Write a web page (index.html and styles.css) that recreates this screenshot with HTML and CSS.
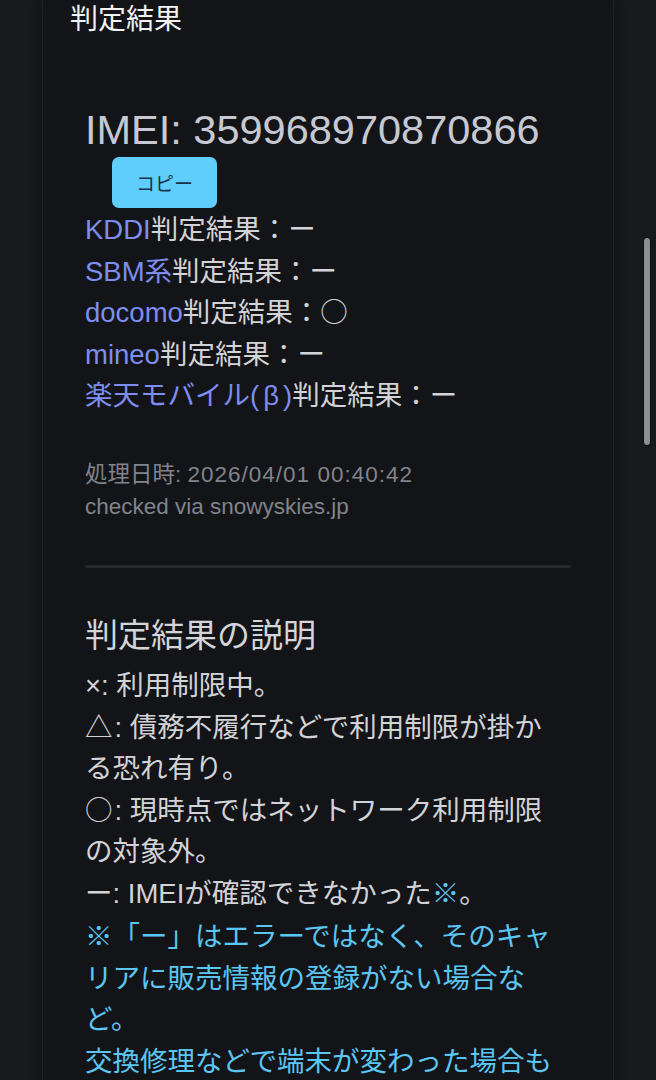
FILE: index.html
```html
<!DOCTYPE html>
<html lang="ja">
<head>
  <meta charset="UTF-8" />
  <meta name="viewport" content="width=device-width, initial-scale=1.0"/>
  <title>判定結果</title>
  <link rel="stylesheet" href="styles.css">
</head>
<body>

  <div class="card">
    <h2 class="card-title">判定結果</h2>

    <!-- Result -->
    <div class="result">
      <div class="imei">IMEI: 359968970870866</div>
      <button class="copy-btn">コピー</button>

      <ul class="carriers">
        <li><span class="carrier">KDDI</span>判定結果：ー</li>
        <li><span class="carrier">SBM系</span>判定結果：ー</li>
        <li><span class="carrier">docomo</span>判定結果：<span class="sym">○</span></li>
        <li><span class="carrier">mineo</span>判定結果：ー</li>
        <li><span class="carrier">楽天モバイル(<span class="beta">β</span>)</span>判定結果：ー</li>
      </ul>

      <p class="meta">処理日時: <span class="date">2026/04/01 00:40:42</span><br>checked via snowyskies.jp</p>

      <hr class="divider">

      <!-- Legend -->
      <h3 class="legend-title">判定結果の説明</h3>
      <p class="legend">
        ×: 利用制限中。<br>
        <span class="sym">△</span>: 債務不履行などで利用制限が掛かる恐れ有り。<br>
        <span class="sym">○</span>: 現時点ではネットワーク利用制限の対象外。<br>
        ー: IMEIが確認できなかった<span class="mark">※</span>。
      </p>
      <p class="note">
        ※「ー」はエラーではなく、そのキャリアに販売情報の登録がない場合など。<br>
        交換修理などで端末が変わった場合も「ー」になります。
      </p>
    </div>
  </div>

  <div class="scroll-thumb"></div>

</body>
</html>
```

FILE: styles.css
```css
html, body {
  height: 100%;
  overflow: hidden;
}

body {
  margin: 0;
  padding: 0;
  background: #18191d;
  font-family: 'Liberation Sans', 'Noto Sans CJK JP', sans-serif;
  color: #d2d3d7;
}

.card {
  margin: 0 42px;
  min-height: 100%;
  padding: 0 27px;
  background-color: #131418;
  border-left: 1px solid #1f2025;
  border-right: 1px solid #1f2025;
  box-shadow: 0 0 10px rgba(0, 0, 0, 0.35);
}

.card-title {
  margin: 0;
  font-size: 28px;
  font-weight: normal;
  line-height: 40px;
  color: #f2f2f4;
}

.result {
  margin-top: 66px;
  padding: 0 15px;
}

.imei {
  font-size: 41.5px;
  line-height: 48px;
  color: #c6c9d1;
}

.copy-btn {
  display: block;
  margin: 3px 0 0 27px;
  height: 51px;
  padding: 0 24px;
  background-color: #5fcefd;
  color: #1b3246;
  border: none;
  border-radius: 7px;
  font-family: 'Noto Sans CJK JP', sans-serif;
  font-size: 19px;
  cursor: pointer;
}

.carriers {
  list-style: none;
  margin: 1px 0 0;
  padding: 0;
  font-size: 27.5px;
  line-height: 41.5px;
}

.carrier {
  color: #7d8df0;
}

.beta {
  margin: 0 4px;
}

.sym {
  font-family: 'Noto Sans CJK JP', sans-serif;
  line-height: 1;
  margin-right: 2px;
}

.meta {
  margin: 42.5px 0 0;
  font-size: 22.5px;
  line-height: 32px;
  color: #80848b;
}

.date {
  letter-spacing: 1px;
}

.divider {
  margin: 42px 0 0;
  height: 3px;
  border: none;
  border-radius: 2px;
  background-color: #26282d;
}

.legend-title {
  margin: 43px 0 0;
  font-size: 33px;
  font-weight: normal;
  line-height: 50px;
  color: #d4d5d8;
}

.legend {
  max-width: 475px;
  margin: 4px 0 0;
  font-size: 27.5px;
  line-height: 41.5px;
}

.mark {
  color: #5cc6f2;
}

.note {
  max-width: 475px;
  margin: 2px 0 0;
  font-size: 27.5px;
  line-height: 41.5px;
  color: #5cc6f2;
}

/* overlay scrollbar */
.scroll-thumb {
  position: fixed;
  top: 238px;
  right: 6px;
  width: 6px;
  height: 207px;
  border-radius: 3px;
  background-color: #8d8e91;
  box-shadow: 0 0 0 1px rgba(0, 0, 0, 0.5);
}
```
